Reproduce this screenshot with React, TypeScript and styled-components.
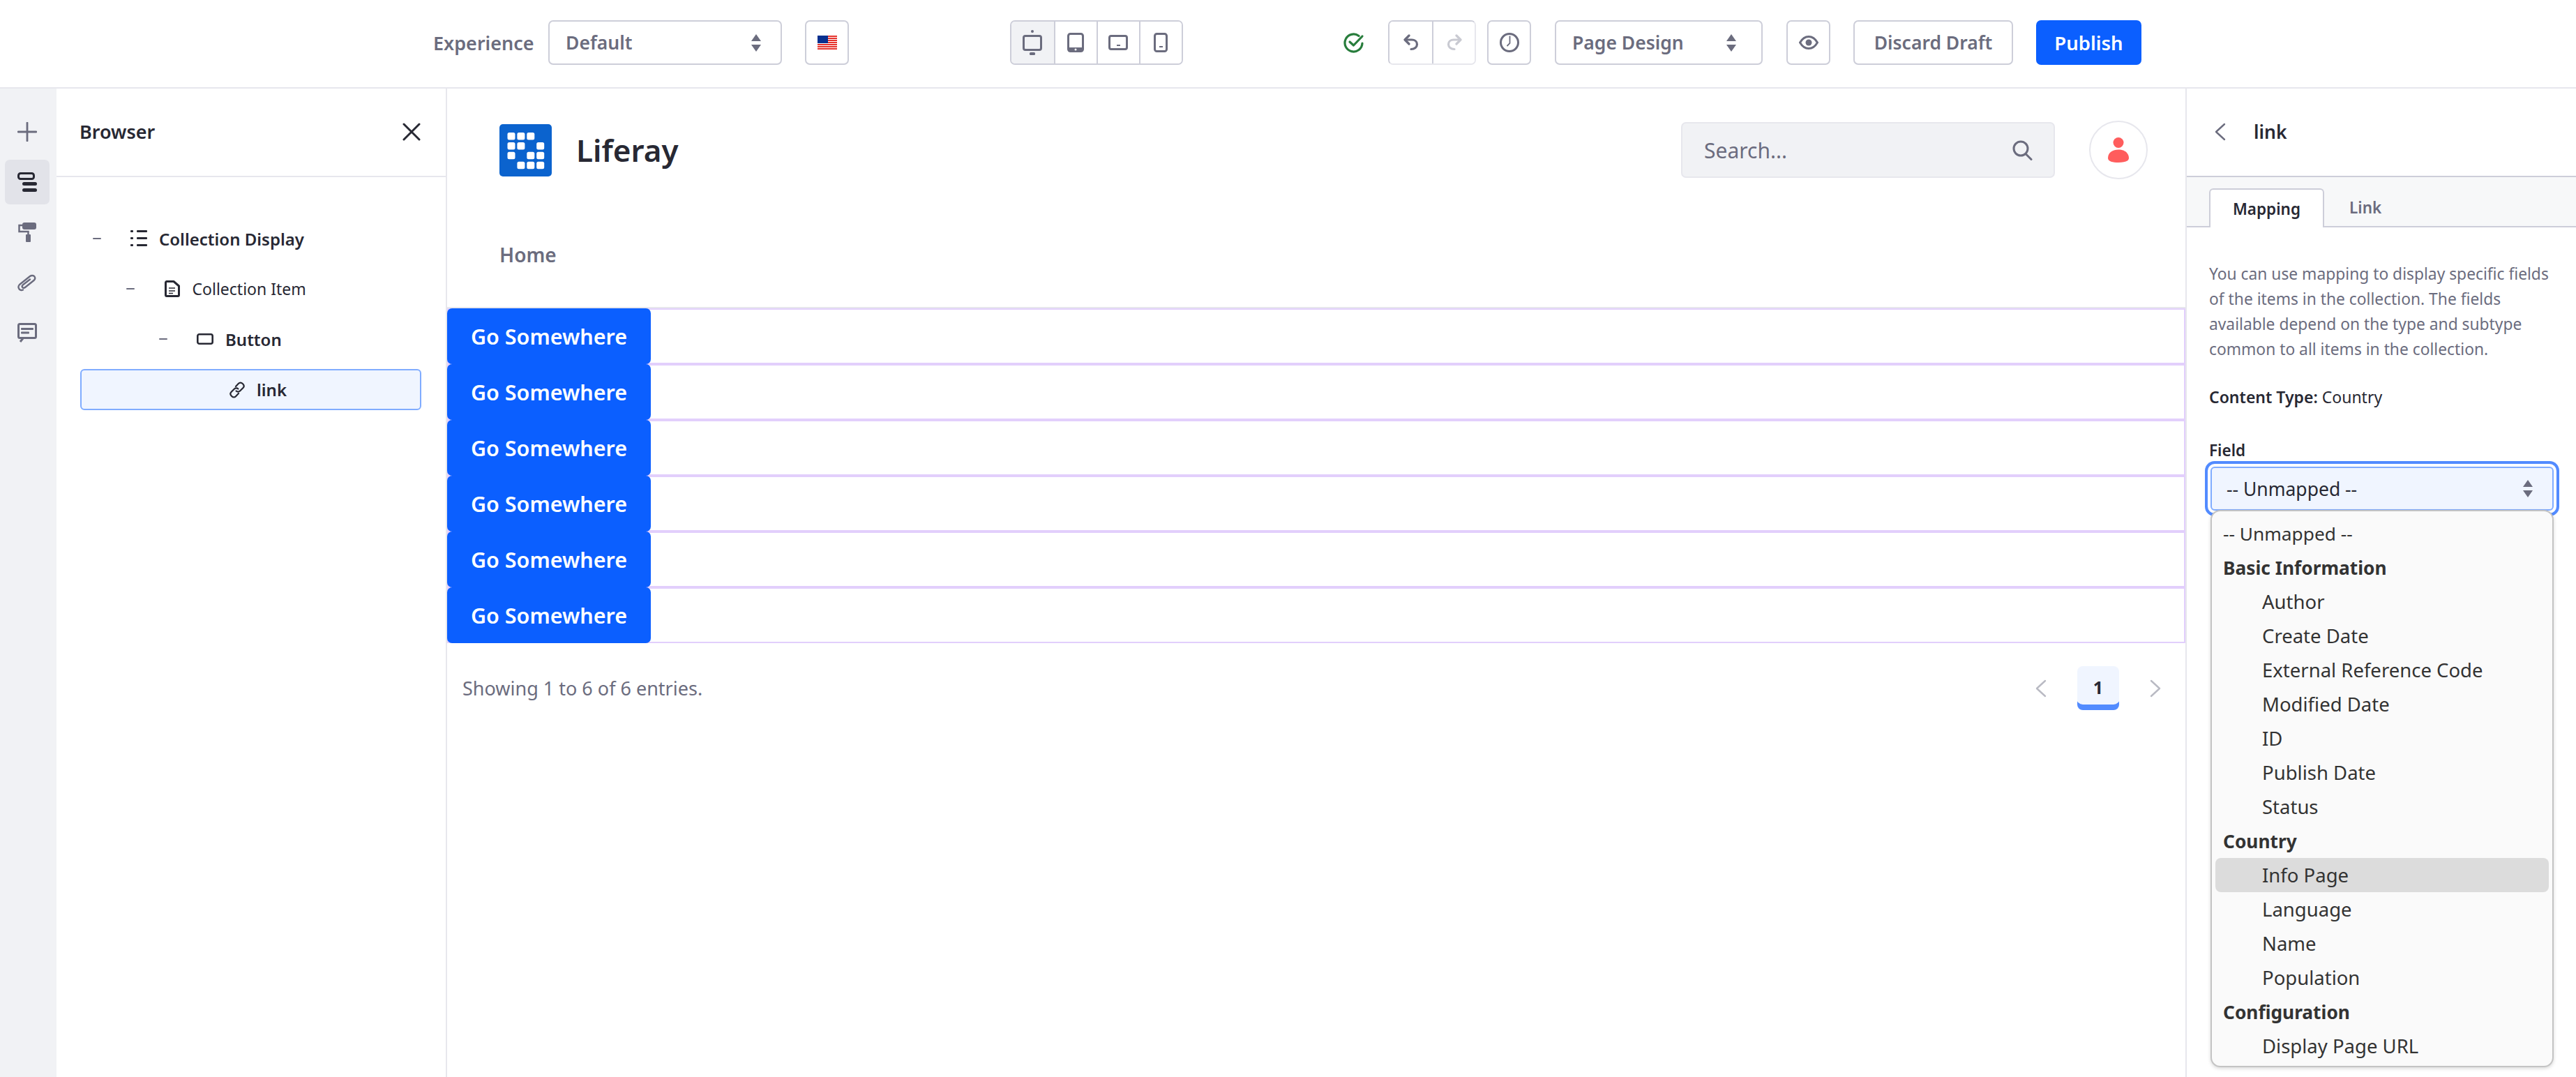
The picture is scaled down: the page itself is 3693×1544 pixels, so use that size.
import React from "react";
import styled, { createGlobalStyle } from "styled-components";

const FONT = `"Noto Sans", "Open Sans", "Liberation Sans", sans-serif`;
const Global = createGlobalStyle`
  html, body { margin: 0; padding: 0; background: #fff; }
  body { font-family: ${FONT}; color: #272833; }
  * { box-sizing: border-box; }
`;

const Page = styled.div`
  width: 3693px; height: 1544px; overflow: hidden; display: flex; flex-direction: column; background: #fff;
`;
const TopBar = styled.header`
  height: 127px; flex: none; border-bottom: 2px solid #e7e7ed; display: flex; justify-content: center; padding: 29px 2px 0 0;
`;
const TopInner = styled.div`
  width: 2449px; height: 64px; display: flex; justify-content: space-between; align-items: center;
`;
const Group = styled.div`
  display: flex; align-items: center;
`;
const TopLabel = styled.span`
  width: 165px; flex: none; font-size: 27px; font-weight: 600; color: #6b6c7e; white-space: nowrap;
`;
const SelectBox = styled.div<{ $w: number; $pad: number }>`
  width: ${p => p.$w}px; height: 64px; border: 2px solid #cdced9; border-radius: 7px; background: #fff; flex: none;
  display: flex; align-items: center; justify-content: space-between; padding: 0 ${p => p.$pad}px 0 23px;
  font-size: 26.5px; font-weight: 600; color: #6b6c7e;
`;
const IconBtn = styled.div<{ $w?: number }>`
  width: ${p => p.$w ?? 63}px; height: 64px; border: 2px solid #cdced9; border-radius: 7px; background: #fff;
  display: flex; align-items: center; justify-content: center; color: #6b6c7e; flex: none;
`;
const Segmented = styled.div`
  display: flex; height: 64px; border: 2px solid #cdced9; border-radius: 7px; overflow: hidden; flex: none;
`;
const Segment = styled.div<{ $active?: boolean }>`
  width: 61px; display: flex; align-items: center; justify-content: center; color: #6b6c7e;
  background: ${p => (p.$active ? "#f1f2f5" : "#fff")};
  & + & { border-left: 2px solid #cdced9; }
`;
const UndoGroup = styled(Segmented)`
  border-color: #cdced9 #e7e7ed #e7e7ed #cdced9;
`;
const RedoSeg = styled(Segment)`
  color: #c9cad2;
`;
const TextBtn = styled.div<{ $w: number }>`
  width: ${p => p.$w}px; height: 64px; border: 2px solid #cdced9; border-radius: 7px; flex: none;
  display: flex; align-items: center; justify-content: center; font-size: 26.5px; font-weight: 600; color: #6b6c7e; white-space: nowrap;
`;
const PrimaryBtn = styled.div`
  width: 151px; height: 64px; background: #0b5fff; border-radius: 7px; color: #fff; flex: none;
  display: flex; align-items: center; justify-content: center; font-size: 27.5px; font-weight: 600;
`;
const Spacer = styled.div<{ $w: number }>` width: ${p => p.$w}px; flex: none; `;

const Main = styled.div`
  flex: 1; display: flex; min-height: 0;
`;
const Rail = styled.nav`
  width: 81px; flex: none; background: #f1f2f5; padding: 30px 0 0 7px; display: flex; flex-direction: column; gap: 8px;
`;
const RailBtn = styled.div<{ $active?: boolean }>`
  width: 64px; height: 64px; border-radius: 7px; display: flex; align-items: center; justify-content: center;
  background: ${p => (p.$active ? "#e2e3e9" : "transparent")};
  color: ${p => (p.$active ? "#272833" : "#6b6c7e")};
`;
const BrowserPanel = styled.aside`
  width: 560px; flex: none; border-right: 2px solid #e7e7ed; display: flex; flex-direction: column;
`;
const PanelHead = styled.div`
  height: 127px; flex: none; border-bottom: 2px solid #e7e7ed; display: flex; align-items: center; justify-content: space-between;
  padding: 0 36px 2px 33px;
`;
const PanelTitle = styled.h2`
  margin: 0; font-size: 27px; font-weight: 600; color: #272833;
`;
const Tree = styled.div`
  padding-top: 52px; display: flex; flex-direction: column;
`;
const TreeRow = styled.div<{ $level: number }>`
  height: 72px; display: flex; align-items: center; padding-left: ${p => 52 + p.$level * 47.5}px;
`;
const Dash = styled.span`
  width: 12px; height: 2px; background: #6b6c7e; margin-right: 42px; flex: none; border-radius: 1px;
`;
const TreeIcon = styled.span`
  width: 24px; height: 24px; display: flex; align-items: center; justify-content: center; margin-right: 17px; color: #272833; flex: none;
`;
const TreeLabel = styled.span<{ $bold?: boolean }>`
  font-size: ${p => (p.$bold ? 24 : 23)}px; font-weight: ${p => (p.$bold ? 600 : 400)}; color: #272833; white-space: nowrap;
`;
const TreeSelected = styled.div`
  margin: 7px 0 0 34px; width: 489px; height: 59px; border: 2px solid #80acff; border-radius: 6px; background: #f0f5ff;
  display: flex; align-items: center; justify-content: center; gap: 16px; font-size: 24px; font-weight: 600; color: #272833; padding-left: 20px;
`;

const Canvas = styled.main`
  width: 2492px; flex: none; display: flex; flex-direction: column;
`;
const Masthead = styled.div`
  height: 315px; flex: none; border-bottom: 2px solid #e7e7ed; padding: 46px 54px 0 75px;
`;
const BrandRow = styled.div`
  display: flex; align-items: center; height: 84px;
`;
const BrandName = styled.span`
  margin-left: 35px; font-size: 44px; font-weight: 600; color: #272833; flex: 1;
`;
const SearchBox = styled.div`
  width: 536px; height: 80px; background: #f1f2f5; border: 2px solid #e7e7ed; border-radius: 7px;
  display: flex; align-items: center; justify-content: space-between; padding: 0 30px 0 31px;
  font-size: 30px; color: #6b6c7e;
`;
const Avatar = styled.div`
  width: 84px; height: 84px; margin-left: 49px; border: 2px solid #e7e7ed; border-radius: 50%; display: flex; align-items: center; justify-content: center;
`;
const HomeLink = styled.div`
  margin-top: 90px; font-size: 28px; font-weight: 600; color: #6b6c7e; line-height: 36px;
`;
const Rows = styled.div` display: flex; flex-direction: column; flex: none; `;
const Row = styled.div`
  height: 80px; box-shadow: inset 0 0 0 2px #e2cffc; display: flex;
`;
const GoBtn = styled.div`
  width: 292px; height: 80px; background: #0b5fff; color: #fff; border-radius: 7px; display: flex; align-items: center; justify-content: center;
  font-size: 30.5px; font-weight: 600;
`;
const ListFooter = styled.div`
  height: 125px; margin-top: 2px; display: flex; align-items: center; justify-content: space-between; padding: 0 35px 0 22px;
`;
const Entries = styled.span` font-size: 27px; color: #6b6c7e; `;
const Pager = styled.div` display: flex; align-items: center; gap: 44px; `;
const PageNum = styled.div`
  width: 60px; height: 63px; background: #f0f5ff; border-radius: 8px; overflow: hidden;
  display: flex; align-items: center; justify-content: center; padding-bottom: 4px;
  font-size: 25px; font-weight: 700; color: #272833; box-shadow: inset 0 -9px 0 -1px #528bff;
`;

const RightPanel = styled.aside`
  flex: 1; border-left: 2px solid #e7e7ed; display: flex; flex-direction: column; min-width: 0;
`;
const RightHead = styled.div`
  height: 127px; flex: none; border-bottom: 2px solid #cdced9; display: flex; align-items: center; padding: 0 0 2px 40px; gap: 40px;
  font-size: 26.5px; font-weight: 600;
`;
const TabBand = styled.div`
  height: 72px; flex: none; background: #f7f8f9; border-bottom: 2px solid #cdced9; display: flex; align-items: flex-end; padding-left: 32px;
`;
const Tab = styled.div<{ $active?: boolean }>`
  width: 165px; height: ${p => (p.$active ? 56 : 54)}px; margin-bottom: ${p => (p.$active ? -2 : 0)}px;
  display: flex; align-items: center; padding-left: ${p => (p.$active ? 0 : 36)}px; justify-content: ${p => (p.$active ? "center" : "flex-start")};
  background: ${p => (p.$active ? "#fff" : "transparent")};
  border: ${p => (p.$active ? "2px solid #cdced9" : "none")}; border-bottom: none; border-radius: 6px 6px 0 0;
  font-size: 22.5px; font-weight: 600; color: ${p => (p.$active ? "#272833" : "#6b6c7e")};
`;
const RightBody = styled.div` padding: 49px 32px 0 32px; `;
const Help = styled.p`
  margin: 0; font-size: 22.8px; line-height: 36px; color: #6b6c7e; white-space: nowrap;
`;
const Meta = styled.p`
  margin: 32px 0 0; font-size: 23px; line-height: 36px; color: #272833;
  b { font-weight: 600; }
`;
const FieldLabel = styled.label`
  display: block; margin-top: 46px; font-size: 22.5px; line-height: 26px; font-weight: 600; color: #272833;
`;
const FieldWrap = styled.div` position: relative; margin: 10px 0 0 2px; width: 492px; `;
const FieldSelect = styled.div`
  height: 63px; background: #f0f5ff; border: 2px solid #80acff; border-radius: 6px; box-shadow: 0 0 0 4px #fff, 0 0 0 8px #528bff;
  display: flex; align-items: center; justify-content: space-between; padding: 0 27px 0 21px; font-size: 26.5px; color: #272833;
`;
const SortTint = styled.span`
  display: flex; color: #6b6c7e;
`;
const Menu = styled.div`
  position: absolute; left: 0; top: 62px; width: 492px; height: 799px; background: #fafafa; border: 2px solid #c4c4c4; border-radius: 14px;
  box-shadow: 0 2px 5px rgba(0,0,0,.15); padding: 7px 5px 0; display: flex; flex-direction: column; color: #333;
`;
const MenuItem = styled.div<{ $kind?: "group" | "indent" | "hl" }>`
  height: 49px; flex: none; display: flex; align-items: center; border-radius: 8px; white-space: nowrap;
  font-size: ${p => (p.$kind === "group" ? 26.3 : p.$kind ? 27.5 : 26.3)}px; padding-left: ${p => (p.$kind === "indent" || p.$kind === "hl" ? 67 : 11)}px;
  font-weight: ${p => (p.$kind === "group" ? 700 : 400)};
  background: ${p => (p.$kind === "hl" ? "#dcdcdc" : "transparent")};
`;

const Sort = () => (
  <svg width="16" height="25" viewBox="0 0 16 25" fill="currentColor"><path d="M8 0l7 10H1zM8 25l7-10H1z" /></svg>
);
const Flag = () => (
  <svg width="28" height="20" viewBox="0 0 28 20">
    <rect width="28" height="20" fill="#fff" />
    {[0, 3, 6, 9, 12, 15, 18].map(y => <rect key={y} y={y} width="28" height="2" fill="#e6322c" />)}
    <rect width="15" height="11" fill="#08308f" />
  </svg>
);
const Desktop = () => (
  <svg width="28" height="36" viewBox="0 0 28 36" fill="none">
    <circle cx="14" cy="2" r="2" fill="currentColor" />
    <rect x="1.5" y="8.5" width="25" height="20" rx="2.5" stroke="currentColor" strokeWidth="3" />
    <rect x="10" y="32" width="8" height="4" rx="1.5" fill="currentColor" />
  </svg>
);
const TabletP = () => (
  <svg width="24" height="28" viewBox="0 0 24 28" fill="none">
    <rect x="1.5" y="1.5" width="21" height="25" rx="3" stroke="currentColor" strokeWidth="3" />
    <rect x="1" y="21" width="22" height="6" rx="2" fill="currentColor" />
    <circle cx="12" cy="24" r="1.5" fill="#fff" />
  </svg>
);
const TabletL = () => (
  <svg width="28" height="22" viewBox="0 0 28 22" fill="none">
    <rect x="1.5" y="1.5" width="25" height="19" rx="2.5" stroke="currentColor" strokeWidth="3" />
    <rect x="12" y="14" width="5" height="2" fill="currentColor" />
  </svg>
);
const Phone = () => (
  <svg width="20" height="28" viewBox="0 0 20 28" fill="none">
    <rect x="1.5" y="1.5" width="17" height="25" rx="3" stroke="currentColor" strokeWidth="3" />
    <rect x="8" y="19" width="5" height="2" fill="currentColor" />
  </svg>
);
const CheckStatus = () => (
  <svg width="30" height="30" viewBox="0 0 30 30" fill="none" stroke="#287d3c" strokeWidth="3.200" strokeLinecap="round" strokeLinejoin="round">
    <path d="M22 5.500A12.500 12.500 0 1 0 27 16" />
    <path d="M9 14l5.500 5L27 6" />
  </svg>
);
const Undo = () => (
  <svg width="22" height="24" viewBox="0 0 22 24" fill="none" stroke="currentColor" strokeWidth="3.200" strokeLinecap="round" strokeLinejoin="round">
    <path d="M8 2L2 8l6 6" /><path d="M3 8h9c4 0 7.500 2.500 7.500 6.500S16 21.500 11 21.500" />
  </svg>
);
const Redo = () => (
  <svg width="22" height="24" viewBox="0 0 22 24" fill="none" stroke="currentColor" strokeWidth="3.200" strokeLinecap="round" strokeLinejoin="round">
    <path d="M14 2l6 6-6 6" /><path d="M19 8h-9c-4 0-7.500 2.500-7.500 6.500S6 21.500 11 21.500" />
  </svg>
);
const Clock = () => (
  <svg width="28" height="28" viewBox="0 0 28 28" fill="none" stroke="currentColor" strokeWidth="3">
    <circle cx="14" cy="14" r="12.500" />
    <path d="M14.500 4.500V15l-4 4" strokeWidth="1.800" />
  </svg>
);
const Eye = () => (
  <svg width="28" height="20" viewBox="0 0 28 20" fill="none">
    <path d="M1.500 10C5 4 9 1.500 14 1.500S23 4 26.500 10C23 16 19 18.500 14 18.500S5 16 1.500 10z" stroke="currentColor" strokeWidth="3" />
    <circle cx="14" cy="10" r="4.500" fill="currentColor" />
  </svg>
);
const Close = () => (
  <svg width="26" height="26" viewBox="0 0 26 26" stroke="#272833" strokeWidth="3" strokeLinecap="round"><path d="M2 2l22 22M24 2L2 24" /></svg>
);
const RailPlus = () => (
  <svg width="28" height="28" viewBox="0 0 28 28" stroke="currentColor" strokeWidth="2.800" strokeLinecap="round"><path d="M14 1v26M1 14h26" /></svg>
);
const RailLayers = () => (
  <svg width="28" height="28" viewBox="0 0 28 28" fill="none">
    <rect x="1.500" y="1.500" width="22" height="8" rx="3" stroke="currentColor" strokeWidth="3" />
    <rect x="7" y="14" width="21" height="5" rx="2.500" fill="currentColor" />
    <rect x="7" y="23" width="21" height="5" rx="2.500" fill="currentColor" />
  </svg>
);
const RailRoller = () => (
  <svg width="26" height="28" viewBox="0 0 26 28" fill="none">
    <rect x="6" y="0" width="20" height="10" rx="3" fill="currentColor" />
    <path d="M6 4H1.500v9H14.500v4" stroke="currentColor" strokeWidth="2.500" />
    <rect x="11" y="17" width="7" height="11" rx="1" fill="currentColor" />
  </svg>
);
const RailClip = () => (
  <svg width="28" height="25" viewBox="0 0 28 25" fill="none" stroke="currentColor" strokeWidth="2.400" strokeLinecap="round" strokeLinejoin="round">
    <path d="M8 22.500c-2 1-5 .5-6-2-1-2-.5-4 1-5.500L18 3c2-1.500 5-1.500 6.500.5 1.200 2 .8 4-1 5.500L11 19c-1.200 1-3 1-3.800 0-.8-1-.5-2.500.5-3.500L18 7.500" />
  </svg>
);
const RailComment = () => (
  <svg width="28" height="28" viewBox="0 0 28 28" fill="none">
    <rect x="1.500" y="1.500" width="25" height="20" rx="2" stroke="currentColor" strokeWidth="3" />
    <path d="M8 22l-4 5" stroke="currentColor" strokeWidth="3" />
    <rect x="5" y="7" width="18" height="3" rx="1" fill="currentColor" />
    <rect x="5" y="12.500" width="12" height="3" rx="1" fill="currentColor" />
  </svg>
);
const ListIcon = () => (
  <svg width="24" height="24" viewBox="0 0 24 24" fill="#272833">
    {[0, 10, 20].map(y => (
      <g key={y}><rect x="0" y={y} width="4" height="3" rx="1" /><rect x="9" y={y} width="15" height="3" rx="1" /></g>
    ))}
  </svg>
);
const DocIcon = () => (
  <svg width="22" height="24" viewBox="0 0 22 24" fill="none" stroke="#272833">
    <path d="M3 1.500h10L20.500 8v13A1.500 1.500 0 0 1 19 22.500H3A1.500 1.500 0 0 1 1.500 21V3A1.500 1.500 0 0 1 3 1.500z" strokeWidth="3" strokeLinejoin="round" />
    <path d="M6 11h9M6 15h9M6 18.500h6" strokeWidth="1.600" />
  </svg>
);
const ButtonIcon = () => (
  <svg width="24" height="16" viewBox="0 0 24 16" fill="none" stroke="#272833" strokeWidth="2.600"><rect x="1.300" y="1.300" width="21.400" height="13.400" rx="2.500" /></svg>
);
const LinkIcon = () => (
  <svg width="24" height="24" viewBox="0 0 24 24" fill="none" stroke="#272833" strokeWidth="2.200" strokeLinecap="round" strokeLinejoin="round">
    <path d="M10 7l4-4.200a3.800 3.800 0 0 1 5.500 0l1 1a3.800 3.800 0 0 1 0 5.200L16 13.500a3.800 3.800 0 0 1-5.400 0" />
    <path d="M14 17l-4 4.200a3.800 3.800 0 0 1-5.500 0l-1-1a3.800 3.800 0 0 1 0-5.200L8 10.500a3.800 3.800 0 0 1 5.400 0" />
  </svg>
);
const Logo = () => {
  const cells = [[0, 0], [1, 0], [2, 0], [0, 1], [1, 1], [3, 1], [0, 2], [2, 2], [3, 2], [1, 3], [2, 3], [3, 3]];
  return (
    <svg width="75" height="75" viewBox="0 0 75 75">
      <rect width="75" height="75" rx="5" fill="#0b63ce" />
      {cells.map(([c, r]) => <rect key={`${c}-${r}`} x={11.500 + c * 13.900} y={12 + r * 13.900} width="11" height="10.500" rx="2.500" fill="#fff" />)}
    </svg>
  );
};
const SearchIcon = () => (
  <svg width="29" height="29" viewBox="0 0 29 29" fill="none" stroke="#6b6c7e" strokeWidth="3" strokeLinecap="round"><circle cx="12" cy="12" r="10" /><path d="M19 19.500l8 8" /></svg>
);
const UserIcon = () => (
  <svg width="32" height="36" viewBox="0 0 32 36" fill="#ff5d5d">
    <ellipse cx="16" cy="7.500" rx="7.500" ry="7.500" /><path d="M16 17.500c8 0 15 4 15 12 0 5-7 6.500-15 6.500S1 34.500 1 29.500c0-8 7-12 15-12z" />
  </svg>
);
const Chev = ({ dir, color }: { dir: "l" | "r"; color: string }) => (
  <svg width="16" height="26" viewBox="0 0 16 26" fill="none" stroke={color} strokeWidth="2.400" strokeLinecap="round" strokeLinejoin="round">
    <path d={dir === "l" ? "M14 2L2 13l12 11" : "M2 2l12 11L2 24"} />
  </svg>
);

const menu: { t: string; k?: "group" | "indent" | "hl" }[] = [
  { t: "-- Unmapped --" },
  { t: "Basic Information", k: "group" },
  { t: "Author", k: "indent" },
  { t: "Create Date", k: "indent" },
  { t: "External Reference Code", k: "indent" },
  { t: "Modified Date", k: "indent" },
  { t: "ID", k: "indent" },
  { t: "Publish Date", k: "indent" },
  { t: "Status", k: "indent" },
  { t: "Country", k: "group" },
  { t: "Info Page", k: "hl" },
  { t: "Language", k: "indent" },
  { t: "Name", k: "indent" },
  { t: "Population", k: "indent" },
  { t: "Configuration", k: "group" },
  { t: "Display Page URL", k: "indent" },
];

export default function App() {
  return (
    <Page>
      <Global />
      <TopBar>
        <TopInner>
          <Group>
            <TopLabel>Experience</TopLabel>
            <SelectBox $w={335} $pad={27}>Default<Sort /></SelectBox>
            <Spacer $w={33} />
            <IconBtn><Flag /></IconBtn>
          </Group>
          <Segmented>
            <Segment $active><Desktop /></Segment>
            <Segment><TabletP /></Segment>
            <Segment><TabletL /></Segment>
            <Segment><Phone /></Segment>
          </Segmented>
          <Group>
            <CheckStatus />
            <Spacer $w={34} />
            <UndoGroup>
              <Segment><Undo /></Segment>
              <RedoSeg><Redo /></RedoSeg>
            </UndoGroup>
            <Spacer $w={16} />
            <IconBtn><Clock /></IconBtn>
            <Spacer $w={34} />
            <SelectBox $w={298} $pad={35}>Page Design<Sort /></SelectBox>
            <Spacer $w={34} />
            <IconBtn><Eye /></IconBtn>
            <Spacer $w={33} />
            <TextBtn $w={229}>Discard Draft</TextBtn>
            <Spacer $w={33} />
            <PrimaryBtn>Publish</PrimaryBtn>
          </Group>
        </TopInner>
      </TopBar>
      <Main>
        <Rail>
          <RailBtn><RailPlus /></RailBtn>
          <RailBtn $active><RailLayers /></RailBtn>
          <RailBtn><RailRoller /></RailBtn>
          <RailBtn><RailClip /></RailBtn>
          <RailBtn><RailComment /></RailBtn>
        </Rail>
        <BrowserPanel>
          <PanelHead>
            <PanelTitle>Browser</PanelTitle>
            <Close />
          </PanelHead>
          <Tree>
            <TreeRow $level={0}><Dash /><TreeIcon><ListIcon /></TreeIcon><TreeLabel $bold>Collection Display</TreeLabel></TreeRow>
            <TreeRow $level={1}><Dash /><TreeIcon><DocIcon /></TreeIcon><TreeLabel>Collection Item</TreeLabel></TreeRow>
            <TreeRow $level={2}><Dash /><TreeIcon><ButtonIcon /></TreeIcon><TreeLabel $bold>Button</TreeLabel></TreeRow>
            <TreeSelected><LinkIcon />link</TreeSelected>
          </Tree>
        </BrowserPanel>
        <Canvas>
          <Masthead>
            <BrandRow>
              <Logo />
              <BrandName>Liferay</BrandName>
              <SearchBox>Search...<SearchIcon /></SearchBox>
              <Avatar><UserIcon /></Avatar>
            </BrandRow>
            <HomeLink>Home</HomeLink>
          </Masthead>
          <Rows>
            {[0, 1, 2, 3, 4, 5].map(i => <Row key={i}><GoBtn>Go Somewhere</GoBtn></Row>)}
          </Rows>
          <ListFooter>
            <Entries>Showing 1 to 6 of 6 entries.</Entries>
            <Pager>
              <Chev dir="l" color="#b9bac3" />
              <PageNum>1</PageNum>
              <Chev dir="r" color="#b9bac3" />
            </Pager>
          </ListFooter>
        </Canvas>
        <RightPanel>
          <RightHead><Chev dir="l" color="#6b6c7e" />link</RightHead>
          <TabBand>
            <Tab $active>Mapping</Tab>
            <Tab>Link</Tab>
          </TabBand>
          <RightBody>
            <Help>
              You can use mapping to display specific fields<br />
              of the items in the collection. The fields<br />
              available depend on the type and subtype<br />
              common to all items in the collection.
            </Help>
            <Meta><b>Content Type:</b> Country</Meta>
            <FieldLabel>Field</FieldLabel>
            <FieldWrap>
              <FieldSelect>-- Unmapped --<SortTint><Sort /></SortTint></FieldSelect>
              <Menu>
                {menu.map(m => <MenuItem key={m.t} $kind={m.k}>{m.t}</MenuItem>)}
              </Menu>
            </FieldWrap>
          </RightBody>
        </RightPanel>
      </Main>
    </Page>
  );
}
